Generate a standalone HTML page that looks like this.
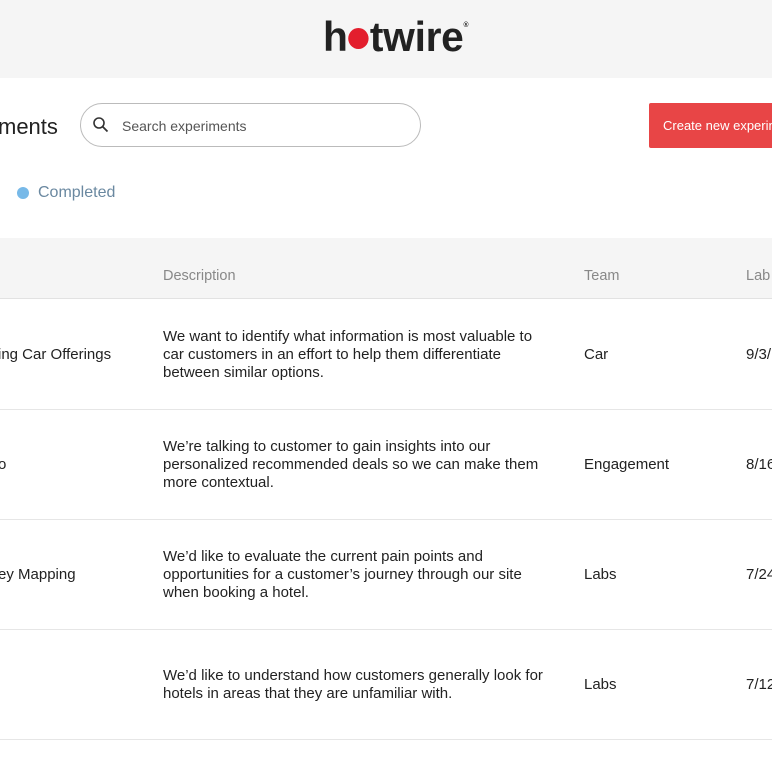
<!DOCTYPE html>
<html><head><style>
*{margin:0;padding:0;box-sizing:border-box}
body{width:772px;height:772px;overflow:hidden;background:#fff;font-family:"Liberation Sans",sans-serif;position:relative;color:#222}
.a{position:absolute;white-space:nowrap}
.hdr{position:absolute;left:0;top:0;width:772px;height:78px;background:#f5f5f5}
.th{position:absolute;left:0;top:238px;width:772px;height:61px;background:#f5f5f5;border-bottom:1px solid #e2e2e2}
.th span{position:absolute;top:30px;font-size:14.5px;color:#888}
.row{position:absolute;left:0;width:772px;height:110px;border-bottom:1px solid #e6e6e6;font-size:15px;color:#222}
.row .c{position:absolute;top:50%;transform:translateY(-50%);line-height:18px}
</style></head><body>
<div class="hdr"></div>
<div class="a" style="left:323px;top:13px;font-size:42px;font-weight:bold;color:#222;letter-spacing:-0.3px;transform:scaleX(0.97);transform-origin:left">h<span style="display:inline-block;width:21px;height:21px;border-radius:50%;background:#e31e2d;vertical-align:2px;margin:0 1px"></span>twire<span style="font-size:7px;vertical-align:24px">®</span></div>
<div class="a" style="left:-2px;top:114px;font-size:22px;color:#222">ments</div>
<div class="a" style="left:80px;top:103px;width:341px;height:44px;border:1px solid #bbb;border-radius:22px"></div>
<svg class="a" style="left:92px;top:116px" width="18" height="18" viewBox="0 0 18 18"><circle cx="7" cy="7" r="5" fill="none" stroke="#333" stroke-width="1.6"/><line x1="10.5" y1="10.5" x2="15.5" y2="15.5" stroke="#333" stroke-width="1.8"/></svg>
<div class="a" style="left:122px;top:118px;font-size:14px;color:#555">Search experiments</div>
<div class="a" style="left:649px;top:103px;width:130px;height:45px;background:#e84546;border-radius:2px;color:#fff;font-size:13px;padding:15px 0 0 14px">Create new experiment</div>
<div class="a" style="left:17px;top:187px;width:12px;height:12px;border-radius:50%;background:#77b9e8"></div>
<div class="a" style="left:38px;top:184px;font-size:16px;color:#6a88a0">Completed</div>
<div class="th"><span style="left:163px">Description</span><span style="left:584px">Team</span><span style="left:746px">Lab</span></div>
<div class="row" style="top:300px"><div class="c" style="left:-2px">ing Car Offerings</div><div class="c" style="left:163px">We want to identify what information is most valuable to<br>car customers in an effort to help them differentiate<br>between similar options.</div><div class="c" style="left:584px">Car</div><div class="c" style="left:746px">9/3/</div></div>
<div class="row" style="top:410px"><div class="c" style="left:-2px">o</div><div class="c" style="left:163px">We’re talking to customer to gain insights into our<br>personalized recommended deals so we can make them<br>more contextual.</div><div class="c" style="left:584px">Engagement</div><div class="c" style="left:746px">8/16</div></div>
<div class="row" style="top:520px"><div class="c" style="left:-2px">ey Mapping</div><div class="c" style="left:163px">We’d like to evaluate the current pain points and<br>opportunities for a customer’s journey through our site<br>when booking a hotel.</div><div class="c" style="left:584px">Labs</div><div class="c" style="left:746px">7/24</div></div>
<div class="row" style="top:630px"><div class="c" style="left:163px">We’d like to understand how customers generally look for<br>hotels in areas that they are unfamiliar with.</div><div class="c" style="left:584px">Labs</div><div class="c" style="left:746px">7/12</div></div>
</body></html>
